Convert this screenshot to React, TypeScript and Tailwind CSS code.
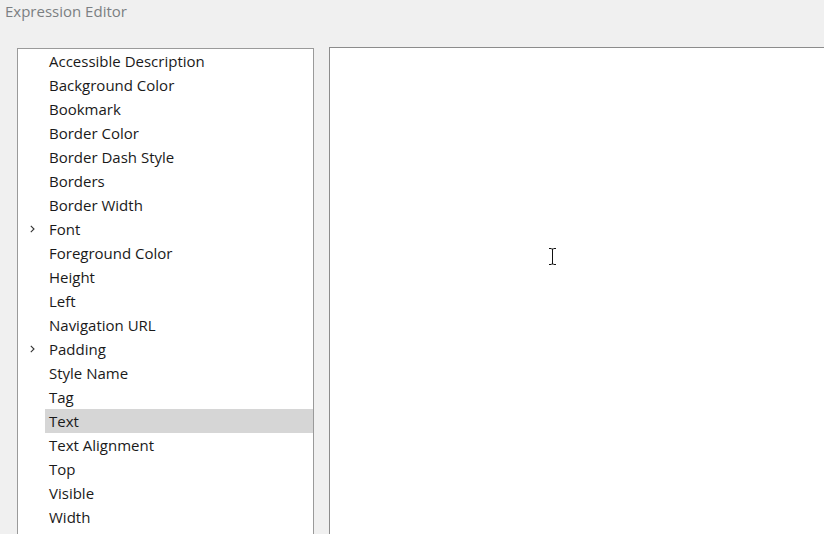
import React from "react";

const items: { label: string; expand?: boolean; selected?: boolean }[] = [
  { label: "Accessible Description" },
  { label: "Background Color" },
  { label: "Bookmark" },
  { label: "Border Color" },
  { label: "Border Dash Style" },
  { label: "Borders" },
  { label: "Border Width" },
  { label: "Font", expand: true },
  { label: "Foreground Color" },
  { label: "Height" },
  { label: "Left" },
  { label: "Navigation URL" },
  { label: "Padding", expand: true },
  { label: "Style Name" },
  { label: "Tag" },
  { label: "Text", selected: true },
  { label: "Text Alignment" },
  { label: "Top" },
  { label: "Visible" },
  { label: "Width" },
];

export default function App() {
  return (
    <div
      className="w-[824px] h-[534px] overflow-hidden bg-[#f0f0f0] flex flex-col"
      style={{ fontFamily: '"Open Sans", "Noto Sans", sans-serif' }}
    >
      <div className="h-[48px] pl-[5px] text-[15px] leading-[22px] text-[#7b7f82]">
        Expression Editor
      </div>
      <div className="flex flex-1 min-h-0 pl-[17px] gap-[15px]">
        <div className="w-[297px] shrink-0 bg-white border border-[#9a9a9a] border-b-0">
          {items.map((it) => (
            <div
              key={it.label}
              className={`h-[24px] flex items-center text-[15px] text-[#1a1a1a] ${
                it.selected ? "bg-[#d6d6d6] ml-[27px] pl-[4px]" : "pl-[31px]"
              }`}
            >
              {!it.selected && (
                <span className="w-[12px] -ml-[23px] mr-[11px] flex items-center justify-center">
                  {it.expand && (
                    <svg width="5" height="8" viewBox="0 0 5 8">
                      <path d="M0.8 0.8 L4 4 L0.8 7.2" fill="none" stroke="#333" strokeWidth="1.1" />
                    </svg>
                  )}
                </span>
              )}
              <span className="leading-none whitespace-nowrap">{it.label}</span>
            </div>
          ))}
        </div>
        <div className="flex-1 relative bg-white border border-[#8c8c8c] border-r-0 border-b-0 -mt-[1px]">
          <svg
            className="absolute left-[218px] top-[200px]"
            width="9"
            height="17"
            viewBox="0 0 9 17"
          >
            <path d="M1 0.5 H3.5 M5.5 0.5 H8 M4.5 1 V16 M1 16.5 H3.5 M5.5 16.5 H8 M3.5 1 H5.5 M3.5 16 H5.5" stroke="#111" strokeWidth="1" fill="none" />
          </svg>
        </div>
      </div>
    </div>
  );
}
